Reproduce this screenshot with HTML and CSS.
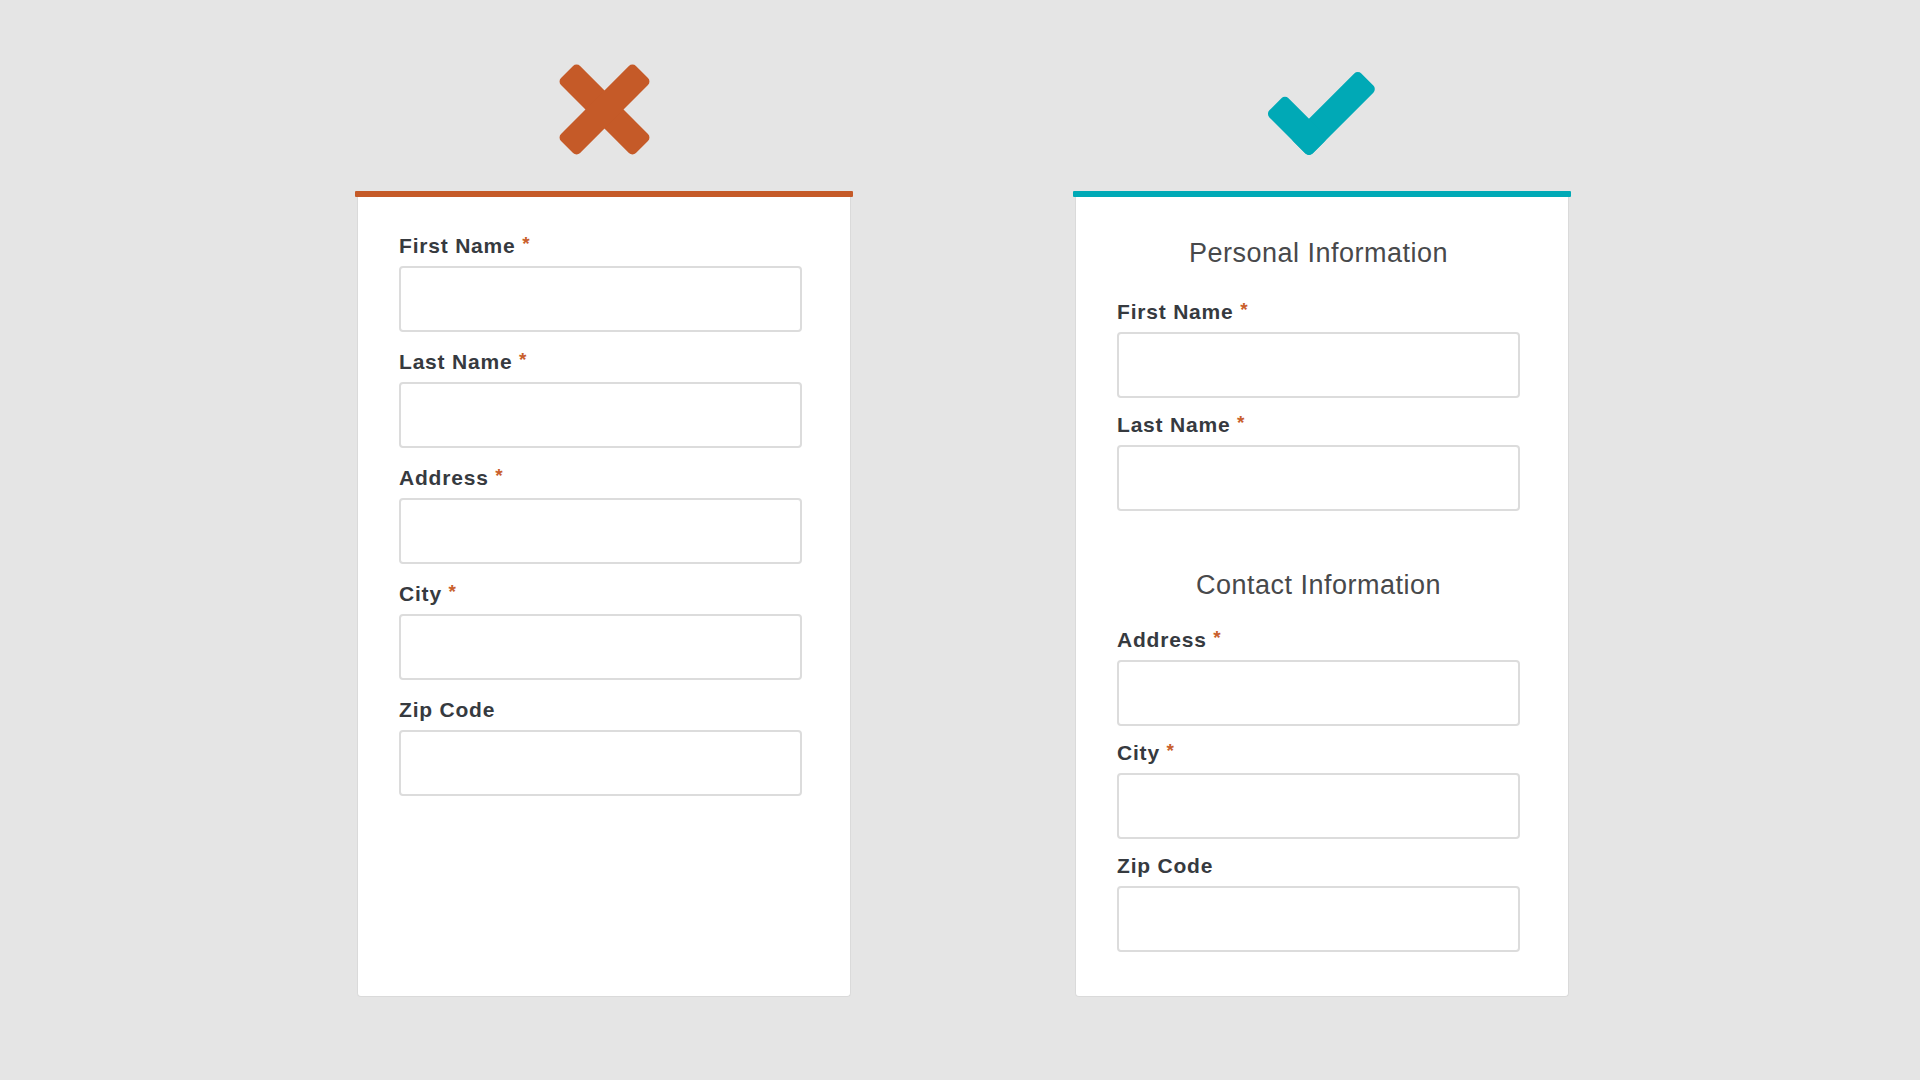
FILE: index.html
```html
<!DOCTYPE html>
<html lang="en">
<head>
    <meta charset="UTF-8">
    <meta name="viewport" content="width=device-width, initial-scale=1.0">
    <title>Form Grouping</title>
    <link rel="stylesheet" href="styles.css">
</head>
<body>

<div class="board">

    <!-- bad example: one long list -->
    <div class="column">
        <div class="mark">
            <svg class="icon-x" width="93" height="93" viewBox="0 0 93 93">
                <g transform="translate(46.5 46.5)">
                    <rect x="-53" y="-13.5" width="106" height="27" rx="5" transform="rotate(45)"/>
                    <rect x="-53" y="-13.5" width="106" height="27" rx="5" transform="rotate(-45)"/>
                </g>
            </svg>
        </div>
        <div class="bar bar-bad"></div>
        <form class="card">
            <div class="field">
                <label for="a-first">First Name <span class="req">*</span></label>
                <input type="text" id="a-first">
            </div>
            <div class="field">
                <label for="a-last">Last Name <span class="req">*</span></label>
                <input type="text" id="a-last">
            </div>
            <div class="field">
                <label for="a-address">Address <span class="req">*</span></label>
                <input type="text" id="a-address">
            </div>
            <div class="field">
                <label for="a-city">City <span class="req">*</span></label>
                <input type="text" id="a-city">
            </div>
            <div class="field">
                <label for="a-zip">Zip Code</label>
                <input type="text" id="a-zip">
            </div>
        </form>
    </div>

    <!-- good example: grouped in sections -->
    <div class="column">
        <div class="mark">
            <svg class="icon-check" width="112" height="90" viewBox="0 -4 112 90">
                <g transform="translate(43 85) rotate(45)">
                    <rect x="-27" y="-96" width="27" height="96" rx="5"/>
                    <rect x="-61" y="-27" width="61" height="27" rx="5"/>
                </g>
            </svg>
        </div>
        <div class="bar bar-good"></div>
        <form class="card card-grouped">
            <h3 class="section-title">Personal Information</h3>
            <div class="field">
                <label for="b-first">First Name <span class="req">*</span></label>
                <input type="text" id="b-first">
            </div>
            <div class="field">
                <label for="b-last">Last Name <span class="req">*</span></label>
                <input type="text" id="b-last">
            </div>

            <h3 class="section-title section-next">Contact Information</h3>
            <div class="field">
                <label for="b-address">Address <span class="req">*</span></label>
                <input type="text" id="b-address">
            </div>
            <div class="field">
                <label for="b-city">City <span class="req">*</span></label>
                <input type="text" id="b-city">
            </div>
            <div class="field">
                <label for="b-zip">Zip Code</label>
                <input type="text" id="b-zip">
            </div>
        </form>
    </div>

</div>

</body>
</html>
```

FILE: styles.css
```css
body {
    margin: 0;
    padding: 0;
    background-color: #e5e5e5;
    font-family: "Liberation Sans", Arial, sans-serif;
    height: 100vh;
    overflow: hidden;
}

.board {
    display: flex;
    gap: 220px;
    padding: 63px 0 0 355px;
}

.column {
    display: flex;
    flex-direction: column;
    width: 498px;
}

.mark {
    height: 93px;
    margin-bottom: 35px;
    display: flex;
    align-items: flex-end;
    justify-content: center;
}

.mark svg {
    display: block;
}

.icon-x {
    fill: #c55a28;
}

.icon-check {
    fill: #00a9b6;
    margin-bottom: -2px;
}

.bar {
    height: 6px;
    border-radius: 1px;
}

.bar-bad {
    background-color: #c55a28;
}

.bar-good {
    background-color: #00a9b6;
}

.card {
    flex: 1;
    margin: 0 2px;
    padding: 37px 48px 44px 41px;
    background-color: #fff;
    border: 1px solid #dadada;
    border-top: none;
    border-radius: 0 0 4px 4px;
}

.field {
    margin-bottom: 18px;
}

.field label {
    display: block;
    height: 24px;
    margin-bottom: 8px;
    font-size: 21px;
    line-height: 24px;
    font-weight: bold;
    letter-spacing: 0.8px;
    color: #363a3f;
}

.req {
    color: #c9602c;
    font-size: 19px;
    vertical-align: top;
    line-height: 20px;
}

.field input {
    display: block;
    box-sizing: border-box;
    width: 100%;
    height: 66px;
    margin: 0;
    border: 2px solid #dcdcdc;
    border-radius: 4px;
    background-color: #fff;
}

.card-grouped {
    padding-top: 39px;
}

.card-grouped .field {
    margin-bottom: 15px;
}

.card-grouped .field:last-child {
    margin-bottom: 0;
}

.section-title {
    margin: 0 0 30px;
    text-align: center;
    font-size: 27px;
    line-height: 34px;
    font-weight: normal;
    letter-spacing: 0.5px;
    color: #48494b;
}

.section-next {
    margin-top: 57px;
    margin-bottom: 26px;
}
```
